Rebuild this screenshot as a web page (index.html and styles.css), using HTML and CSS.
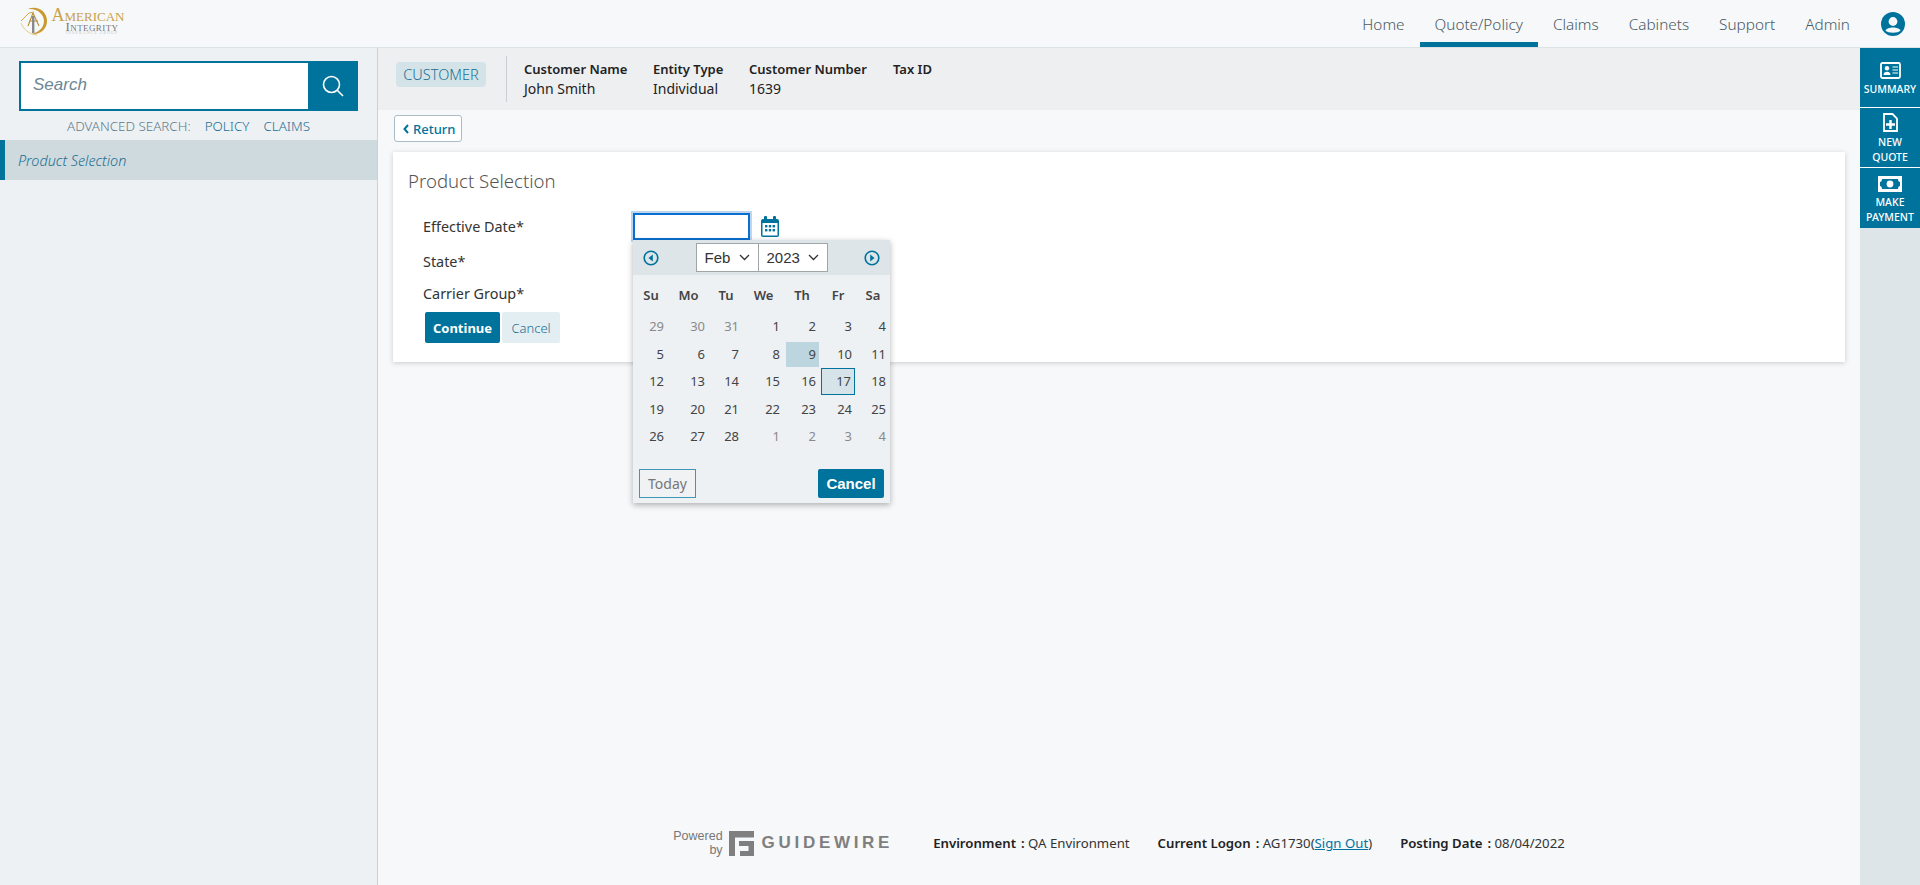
FILE: index.html
```html
<!DOCTYPE html>
<html lang="en">

<head>
    <title>Product Selection</title>

    <link rel="stylesheet" href="styles.css">
</head>

<body>
    <header class="topbar">
        <div class="logo">
            <svg class="logo__mark" width="28" height="29" viewBox="0 0 28 29">
                <path d="M8 2 C16 -2 27 3 27 14 C27 23 19 28 11 27 C18 26 24 21 24 14 C24 7 17 1 8 2 Z" fill="#c9992e"/>
                <path d="M1 16 C4 23 9 27 17 28" fill="none" stroke="#e2c98f" stroke-width="1"/>
                <path d="M1 14 L9 6 L14 5" fill="none" stroke="#d2a641" stroke-width="1"/>
                <path d="M13 6 L8 19 M13 6 L19 19 M9 14 L18 14" fill="none" stroke="#b98f30" stroke-width="1.1"/>
                <rect x="12" y="9" width="2.4" height="17" fill="#8a8a8a"/>
            </svg>
            <div class="logo__text">
                <div class="logo__top">American</div>
                <div class="logo__mid">Integrity</div>
                <div class="logo__sub">INSURANCE GROUP</div>
            </div>
        </div>
        <nav class="nav">
            <a class="nav__item">Home</a>
            <a class="nav__item nav__item--active">Quote/Policy</a>
            <a class="nav__item">Claims</a>
            <a class="nav__item">Cabinets</a>
            <a class="nav__item">Support</a>
            <a class="nav__item">Admin</a>
        </nav>
        <svg class="user" width="24" height="26" viewBox="0 0 24 24">
            <circle cx="12" cy="12" r="12" fill="#00739d"/>
            <circle cx="12" cy="9.5" r="4.4" fill="#f6f8fa"/>
            <path d="M4.5 18.5 C6 14.5 18 14.5 19.5 18.5 C17 21.5 7 21.5 4.5 18.5 Z" fill="#f6f8fa"/>
        </svg>
    </header>

    <div class="page">
        <aside class="sidebar">
            <div class="search">
                <div class="search__input">Search</div>
                <div class="search__btn">
                    <svg width="22" height="22" viewBox="0 0 22 22" fill="none" stroke="#fff" stroke-width="1.6">
                        <circle cx="9.5" cy="9.5" r="8"/>
                        <path d="M15.5 15.5 L21 21"/>
                    </svg>
                </div>
            </div>
            <div class="advanced">
                <span class="advanced__label">ADVANCED SEARCH:</span>
                <a class="advanced__link">POLICY</a>
                <a class="advanced__link">CLAIMS</a>
            </div>
            <div class="side-item">Product Selection</div>
        </aside>

        <main class="content">
            <div class="customer">
                <span class="customer__badge">CUSTOMER</span>
                <div class="customer__sep"></div>
                <div class="customer__field customer__field--name">
                    <b>Customer Name</b>
                    <span>John Smith</span>
                </div>
                <div class="customer__field customer__field--type">
                    <b>Entity Type</b>
                    <span>Individual</span>
                </div>
                <div class="customer__field customer__field--number">
                    <b>Customer Number</b>
                    <span>1639</span>
                </div>
                <div class="customer__field">
                    <b>Tax ID</b>
                </div>
            </div>

            <a class="return">
                <svg width="6" height="10" viewBox="0 0 6 10" fill="none" stroke="#00739d" stroke-width="2">
                    <path d="M5 1 L1.5 5 L5 9"/>
                </svg>
                Return
            </a>

            <section class="card">
                <h1 class="card__title">Product Selection</h1>
                <div class="form-row form-row--date">
                    <label class="form-row__label">Effective Date*</label>
                    <div class="date-field">
                        <div class="date-field__input"></div>
                        <svg class="date-field__icon" width="18" height="21" viewBox="0 0 18 21">
                            <path d="M2 3 H16 A2 2 0 0 1 18 5 V19 A2 2 0 0 1 16 21 H2 A2 2 0 0 1 0 19 V5 A2 2 0 0 1 2 3 Z" fill="#00739d"/>
                            <rect x="3" y="0" width="3" height="5" rx="1" fill="#00739d"/>
                            <rect x="12" y="0" width="3" height="5" rx="1" fill="#00739d"/>
                            <rect x="1.5" y="7" width="15" height="12.5" fill="#fff"/>
                            <g fill="#00739d">
                                <rect x="4" y="9" width="2.4" height="2.4"/>
                                <rect x="7.8" y="9" width="2.4" height="2.4"/>
                                <rect x="11.6" y="9" width="2.4" height="2.4"/>
                                <rect x="4" y="13" width="2.4" height="2.4"/>
                                <rect x="7.8" y="13" width="2.4" height="2.4"/>
                                <rect x="11.6" y="13" width="2.4" height="2.4"/>
                            </g>
                        </svg>

                        <div class="calendar">
                            <div class="calendar__head">
                                <svg width="16" height="16" viewBox="0 0 16 16">
                                    <circle cx="8" cy="8" r="6.8" fill="none" stroke="#00739d" stroke-width="1.6"/>
                                    <path d="M9.8 4.5 V11.5 L5.5 8 Z" fill="#00739d"/>
                                </svg>
                                <div class="calendar__selects">
                                    <div class="calendar__select calendar__select--month">Feb
                                        <svg width="11" height="7" viewBox="0 0 11 7" fill="none" stroke="#333" stroke-width="1.3"><path d="M1 1 L5.5 5.5 L10 1"/></svg>
                                    </div>
                                    <div class="calendar__select calendar__select--year">2023
                                        <svg width="11" height="7" viewBox="0 0 11 7" fill="none" stroke="#333" stroke-width="1.3"><path d="M1 1 L5.5 5.5 L10 1"/></svg>
                                    </div>
                                </div>
                                <svg width="16" height="16" viewBox="0 0 16 16">
                                    <circle cx="8" cy="8" r="6.8" fill="none" stroke="#00739d" stroke-width="1.6"/>
                                    <path d="M6.2 4.5 V11.5 L10.5 8 Z" fill="#00739d"/>
                                </svg>
                            </div>
                            <div class="calendar__grid calendar__grid--week">
                                <span>Su</span><span>Mo</span><span>Tu</span><span>We</span><span>Th</span><span>Fr</span><span>Sa</span>
                            </div>
                            <div class="calendar__grid calendar__grid--days">
                                <span class="muted">29</span><span class="muted">30</span><span class="muted">31</span><span>1</span><span>2</span><span>3</span><span>4</span>
                                <span>5</span><span>6</span><span>7</span><span>8</span><span class="selected">9</span><span>10</span><span>11</span>
                                <span>12</span><span>13</span><span>14</span><span>15</span><span>16</span><span class="today">17</span><span>18</span>
                                <span>19</span><span>20</span><span>21</span><span>22</span><span>23</span><span>24</span><span>25</span>
                                <span>26</span><span>27</span><span>28</span><span class="muted">1</span><span class="muted">2</span><span class="muted">3</span><span class="muted">4</span>
                            </div>
                            <div class="calendar__foot">
                                <button class="calendar__today">Today</button>
                                <button class="calendar__cancel">Cancel</button>
                            </div>
                        </div>
                    </div>
                </div>
                <div class="form-row form-row--state">
                    <label class="form-row__label">State*</label>
                </div>
                <div class="form-row form-row--carrier">
                    <label class="form-row__label">Carrier Group*</label>
                </div>
                <div class="actions">
                    <button class="btn btn--primary">Continue</button>
                    <button class="btn btn--light">Cancel</button>
                </div>
            </section>

            <footer class="footer">
                <div class="brand">
                    <div class="brand__powered">Powered<br>by</div>
                    <svg class="brand__mark" width="25" height="25" viewBox="0 0 25 25">
                        <path d="M0 0 H25 V6.5 H6 V25 H0 Z M10 10 H25 V25 H11 V20 H19.5 V15 H10 Z" fill="#7f7f7f"/>
                    </svg>
                    <span class="brand__name">GUIDEWIRE</span>
                </div>
                <div class="footer__info"><b>Environment</b><b class="footer__colon">:</b> QA Environment</div>
                <div class="footer__info"><b>Current Logon</b><b class="footer__colon">:</b> AG1730(<a class="footer__link">Sign Out</a>)</div>
                <div class="footer__info"><b>Posting Date</b><b class="footer__colon">:</b> 08/04/2022</div>
            </footer>
        </main>

        <aside class="rail">
            <a class="rail__item">
                <svg width="21" height="17" viewBox="0 0 21 17">
                    <rect x="1" y="1" width="19" height="15" rx="1.5" fill="none" stroke="#fff" stroke-width="1.8"/>
                    <circle cx="7" cy="6.3" r="2.2" fill="#fff"/>
                    <path d="M3.5 13 C3.5 8.8 10.5 8.8 10.5 13 Z" fill="#fff"/>
                    <path d="M12.5 5 H18 M12.5 8 H18 M12.5 11 H18" stroke="#fff" stroke-width="1.2"/>
                </svg>
                <span>SUMMARY</span>
            </a>
            <a class="rail__item">
                <svg width="15" height="19" viewBox="0 0 15 19">
                    <path d="M1 1 H9.5 L14 5.5 V18 H1 Z" fill="none" stroke="#fff" stroke-width="1.8"/>
                    <path d="M7.5 7 V16 M3 11.5 H12" stroke="#fff" stroke-width="2.4"/>
                </svg>
                <span>NEW<br>QUOTE</span>
            </a>
            <a class="rail__item">
                <svg width="24" height="16" viewBox="0 0 24 16">
                    <rect width="24" height="16" fill="#fff"/>
                    <path d="M4 3 H20 C20 5 21 6 22 6 V10 C21 10 20 11 20 13 H4 C4 11 3 10 2 10 V6 C3 6 4 5 4 3 Z" fill="#00739d"/>
                    <circle cx="12" cy="8" r="3.4" fill="#fff"/>
                </svg>
                <span>MAKE<br>PAYMENT</span>
            </a>
        </aside>
    </div>
</body>

</html>
```

FILE: styles.css
```css
* {
    padding: 0;
    margin: 0;
    box-sizing: border-box;
}

body {
    background: #f6f8fa;
    color: #222;
    font-family: "Noto Sans", sans-serif;
    font-size: 14px;
    height: 885px;
    overflow: hidden;
}

button {
    font-family: inherit;
    cursor: pointer;
}

/* Шапка */
.topbar {
    display: flex;
    align-items: center;
    height: 48px;
    border-bottom: 1px solid #dbe3e6;
    padding: 0 15px 0 20px;
}

.logo {
    display: flex;
    align-items: flex-start;
    gap: 3px;
    height: 47px;
    padding-top: 6px;
}

.logo__mark {
    margin-top: 1px;
}

.logo__text {
    font-family: "Liberation Serif", serif;
    text-align: center;
    width: 74px;
    line-height: 1;
}

.logo__top {
    color: #c9a24a;
    font-size: 18px;
    font-variant: small-caps;
    height: 14px;
    white-space: nowrap;
}

.logo__mid {
    color: #777;
    font-size: 13px;
    font-variant: small-caps;
    height: 10px;
    letter-spacing: 0.4px;
    padding-left: 8px;
}

.logo__sub {
    color: #c4c4c4;
    font-size: 4px;
    letter-spacing: 1px;
    white-space: nowrap;
    padding-left: 8px;
    margin-top: 1px;
}

.nav {
    display: flex;
    margin-left: auto;
    height: 47px;
}

.nav__item {
    display: flex;
    align-items: center;
    padding: 1px 15px 0;
    height: 47px;
    color: #4a5a64;
    font-size: 15.3px;
    font-weight: 300;
}

.nav__item--active {
    border-bottom: 5px solid #00739d;
    padding-top: 6px;
}

.user {
    margin-left: 16px;
}

.page {
    display: flex;
    height: 837px;
}

/* Левая панель */
.sidebar {
    width: 378px;
    flex-shrink: 0;
    background: #edf1f4;
    border-right: 1px solid #c8d3d8;
    padding-top: 13px;
}

.search {
    display: flex;
    height: 50px;
    margin: 0 19px;
}

.search__input {
    flex: 1;
    background: #fff;
    border: 2px solid #00739d;
    border-right: 0;
    padding-left: 12px;
    line-height: 44px;
    color: #6b8796;
    font-family: "Liberation Sans", sans-serif;
    font-style: italic;
    font-size: 17px;
}

.search__btn {
    display: flex;
    align-items: center;
    justify-content: center;
    width: 50px;
    background: #00739d;
}

.advanced {
    display: flex;
    justify-content: center;
    gap: 14px;
    height: 29px;
    align-items: center;
    font-size: 13.4px;
    font-weight: 300;
}

.advanced__label {
    color: #5f7a8a;
}

.advanced__link {
    color: #1a6f93;
}

.side-item {
    height: 40px;
    line-height: 41px;
    background: #cfdade;
    border-left: 5px solid #00739d;
    padding-left: 13px;
    color: #1a6f93;
    font-style: italic;
    font-size: 14.4px;
    font-weight: 300;
}

/* Основная часть */
.content {
    flex: 1;
    display: flex;
    flex-direction: column;
    min-width: 0;
}

.customer {
    display: flex;
    align-items: flex-start;
    height: 62px;
    background: #eeeff1;
    padding: 14px 0 0 18px;
}

.customer__badge {
    width: 90px;
    height: 25px;
    line-height: 25px;
    border-radius: 4px;
    background: #d3e3e8;
    color: #1a6f93;
    font-size: 14.5px;
    font-weight: 300;
    text-align: center;
}

.customer__sep {
    width: 1px;
    height: 46px;
    margin: -6px 17px 0 20px;
    background: #c9cfd3;
}

.customer__field {
    display: flex;
    flex-direction: column;
    margin-top: -3px;
    font-size: 14px;
    line-height: 20px;
    white-space: nowrap;
}

.customer__field b {
    font-size: 13px;
    font-weight: 600;
}

.customer__field--name {
    width: 129px;
}

.customer__field--type {
    width: 96px;
}

.customer__field--number {
    width: 144px;
}

.return {
    display: flex;
    align-items: center;
    gap: 4px;
    width: 68px;
    height: 27px;
    margin: 5px 0 10px 16px;
    padding-left: 8px;
    background: #fff;
    border: 1px solid #a9bcc6;
    border-radius: 3px;
    color: #00739d;
    font-size: 13px;
    font-weight: 500;
}

.card {
    margin: 0 15px;
    height: 210px;
    background: #fff;
    box-shadow: 0 1px 5px rgba(0, 0, 0, 0.18);
    padding: 15px 0 0 15px;
}

.card__title {
    font-size: 18.6px;
    font-weight: 300;
    line-height: 27px;
    color: #555;
}

.form-row {
    display: flex;
    align-items: center;
    padding-left: 15px;
}

.form-row--date {
    height: 27px;
    margin-top: 19px;
}

.form-row--state {
    height: 20px;
    margin-top: 11px;
}

.form-row--carrier {
    height: 20px;
    margin-top: 12px;
}

.form-row__label {
    width: 210px;
    font-size: 14.4px;
    color: #333;
}

.date-field {
    position: relative;
    display: flex;
    align-items: center;
    gap: 11px;
}

.date-field__input {
    width: 117px;
    height: 27px;
    background: #fff;
    border: 2px solid #0a6fd1;
    box-shadow: 0 0 0 2px #bcd6ee;
}

/* Всплывающий календарь */
.calendar {
    position: absolute;
    z-index: 1;
    top: 27px;
    left: 0;
    width: 257px;
    height: 263px;
    background: #edf1f4;
    box-shadow: 0 2px 6px rgba(0, 0, 0, 0.3);
}

.calendar__head {
    display: flex;
    align-items: center;
    justify-content: space-between;
    height: 35px;
    background: #dde5e8;
    padding: 0 10px;
}

.calendar__selects {
    display: flex;
}

.calendar__select {
    display: flex;
    align-items: center;
    justify-content: space-between;
    height: 29px;
    padding: 0 8px;
    background: #fff;
    border: 1px solid #a0a6a8;
    font-family: "Liberation Sans", sans-serif;
    font-size: 15px;
    color: #333;
}

.calendar__select--month {
    width: 63px;
}

.calendar__select--year {
    width: 70px;
    margin-left: -1px;
}

.calendar__grid {
    display: grid;
    grid-template-columns: 34px 41px 34px 41px 36px 36px 34px;
}

.calendar__grid--week {
    height: 38px;
    align-items: center;
    margin-top: 1px;
    padding-left: 1px;
    text-align: center;
    font-size: 13px;
    font-weight: 600;
    color: #444;
}

.calendar__grid--days {
    grid-auto-rows: 27.5px;
    margin-top: -1px;
    font-size: 13px;
    color: #444;
    text-align: right;
}

.calendar__grid--days span {
    align-self: center;
    padding-right: 3px;
    line-height: 25px;
    height: 25px;
}

.calendar__grid--days .muted {
    color: #8a8a8a;
}

.calendar__grid--days .selected {
    background: #bdd5df;
    margin-left: 3px;
}

.calendar__grid--days .today {
    background: #d6e3e9;
    border: 1px solid #00739d;
    height: 27px;
    margin-left: 2px;
}

.calendar__foot {
    display: flex;
    justify-content: space-between;
    padding: 0 6px;
    margin-top: 18px;
}

.calendar__today {
    width: 57px;
    height: 29px;
    background: #f0f2f3;
    border: 1px solid #3f97b8;
    color: #777;
    font-size: 14px;
}

.calendar__cancel {
    width: 66px;
    height: 29px;
    background: #00739d;
    border: 0;
    border-radius: 2px;
    color: #fff;
    font-family: "Liberation Sans", sans-serif;
    font-size: 15px;
    font-weight: 700;
}

.actions {
    display: flex;
    gap: 2px;
    margin: 9px 0 0 17px;
}

.btn {
    height: 31px;
    border: 0;
    border-radius: 2px;
    font-size: 13px;
}

.btn--primary {
    width: 75px;
    background: #00739d;
    color: #fff;
    font-weight: 700;
}

.btn--light {
    width: 58px;
    background: #e3eef3;
    color: #1a6f93;
    font-weight: 300;
}

/* Подвал */
.footer {
    display: flex;
    align-items: center;
    justify-content: center;
    margin-top: auto;
    height: 70px;
    padding-bottom: 14px;
    font-size: 13.2px;
    color: #333;
}

.brand {
    display: flex;
    align-items: center;
    gap: 8px;
    margin-right: 43px;
}

.brand__powered {
    text-align: right;
    font-family: "Liberation Sans", sans-serif;
    font-size: 12.5px;
    line-height: 14px;
    color: #777;
}

.brand__mark {
    margin-left: -2px;
}

.brand__name {
    color: #7f7f7f;
    font-family: "Liberation Sans", sans-serif;
    font-weight: 700;
    font-size: 17px;
    letter-spacing: 3.7px;
    margin-left: 0;
    margin-right: -3px;
}

.footer__info {
    margin-right: 28px;
    white-space: nowrap;
}

.footer__info:last-child {
    margin-right: 0;
}

.footer__info b {
    font-weight: 600;
    color: #222;
}

.footer__colon {
    margin-left: 5px;
}

.footer__link {
    color: #00739d;
    text-decoration: underline;
}

/* Правая панель */
.rail {
    width: 60px;
    flex-shrink: 0;
    background: #dde5e8;
}

.rail__item {
    display: flex;
    flex-direction: column;
    align-items: center;
    height: 60px;
    padding-top: 14px;
    background: #00739d;
    border-bottom: 1px solid #fff;
    color: #fff;
    font-size: 10.5px;
    font-weight: 500;
    line-height: 15px;
    text-align: center;
}

.rail__item span {
    margin-top: 3px;
}

.rail__item:nth-child(2) {
    padding-top: 5px;
}

.rail__item:nth-child(3) {
    border-bottom: 0;
    padding-top: 8px;
}
```
